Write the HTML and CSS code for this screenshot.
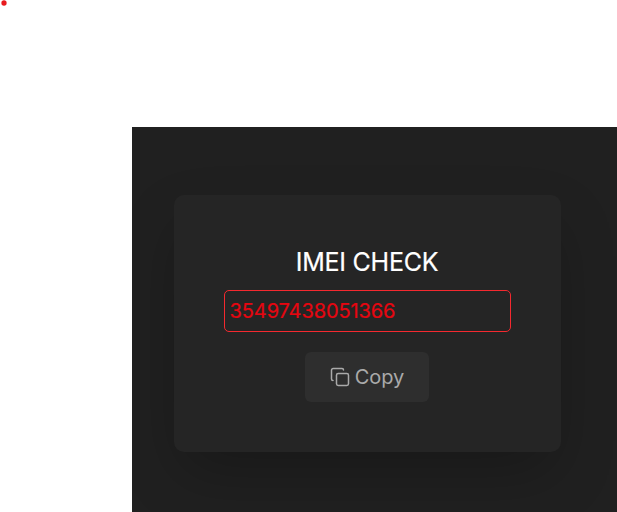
FILE: index.html
```html
<!DOCTYPE html>
<html lang="en">
<head>
<meta charset="utf-8">
<title>IMEI Check</title>
<link rel="stylesheet" href="styles.css">
</head>
<body>
<span class="dot"></span>
<main class="stage">
  <section class="card">
    <h1 class="title">IMEI CHECK</h1>
    <div class="field">35497438051366</div>
    <button class="copy" type="button">
      <svg class="icon" viewBox="0 0 20 20" fill="none" stroke="currentColor" stroke-width="1.5" stroke-linecap="round" stroke-linejoin="round"><rect x="6.500" y="6.500" width="12" height="12" rx="1.700"/><path d="M3 13.500C2.100 13.500 1.500 12.900 1.500 12V3.200C1.500 2.200 2.200 1.500 3.200 1.500H12C12.900 1.500 13.500 2.100 13.500 3"/></svg>
      <span>Copy</span>
    </button>
  </section>
</main>
</body>
</html>
```

FILE: styles.css
```css
* { box-sizing: border-box; }
body {
  margin: 0;
  height: 512px;
  overflow: hidden;
  padding: 127px 0 0 132px;
  background: #fff;
  font-family: Inter, sans-serif;
}
.dot {
  position: absolute;
  left: 1px;
  top: 0;
  width: 6px;
  height: 6px;
  border-radius: 50%;
  background: #e81a1e;
  transform: scale(.88);
}
.stage {
  height: 385px;
  padding: 68px 56px 0 42px;
  background: #202020;
  overflow: hidden;
}
.card {
  display: flex;
  flex-direction: column;
  align-items: center;
  height: 257px;
  padding: 50px;
  border-radius: 10px;
  background: #252525;
  box-shadow: 0 25px 60px -8px rgba(0, 0, 0, .25);
}
.title {
  margin: 0 1px 10px 0;
  font-size: 25px;
  line-height: 35px;
  font-weight: 400;
  letter-spacing: -.25px;
  color: #fff;
  -webkit-text-stroke: .2px #fff;
}
.field {
  width: 287px;
  height: 42px;
  padding: 0 5px;
  border: 1px solid #f5292f;
  border-radius: 5px;
  font-size: 20px;
  line-height: 40px;
  letter-spacing: -.1px;
  text-indent: -.5px;
  color: #e60610;
  -webkit-text-stroke: .2px #e60610;
}
.copy {
  display: flex;
  align-items: center;
  justify-content: center;
  gap: 5px;
  width: 124px;
  height: 50px;
  margin: 20px 1px 0 0;
  padding: 0;
  border: 0;
  border-radius: 6px;
  background: #2e2e2e;
  color: #aaa;
  font: 400 20px Inter, sans-serif;
}
.icon { width: 20px; height: 20px; }
```
